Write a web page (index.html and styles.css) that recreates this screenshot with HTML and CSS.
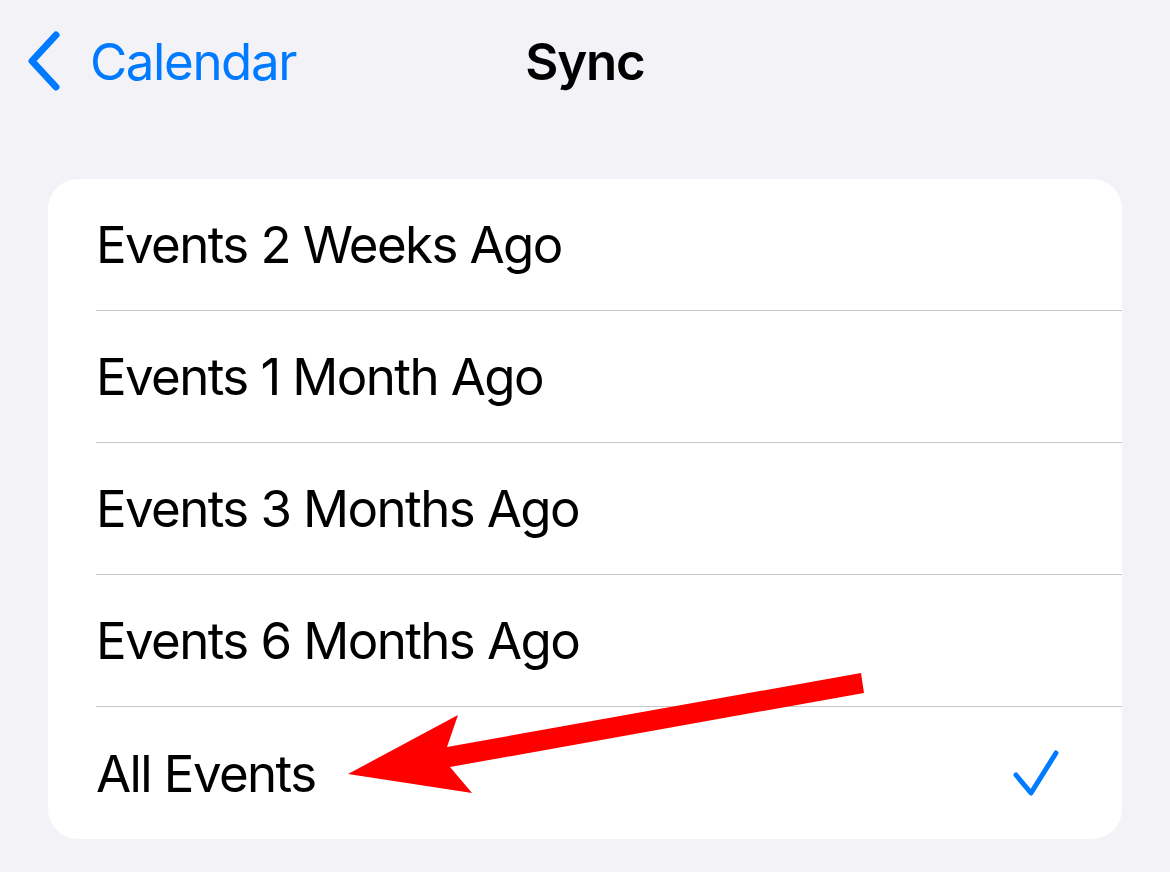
FILE: index.html
```html
<!DOCTYPE html>
<html lang="en">
<head>
<meta charset="utf-8">
<title>Sync</title>
<link rel="stylesheet" href="styles.css">
</head>
<body>
<div class="screen">
  <header class="nav">
    <div class="nav-left">
      <svg class="chevron" width="36" height="60" viewBox="0 0 36 60" aria-hidden="true">
        <path d="M30 4 L6 30 L30 56" fill="none" stroke="#007aff" stroke-width="7" stroke-linecap="round" stroke-linejoin="round"/>
      </svg>
      <span class="back-label">Calendar</span>
    </div>
    <h1 class="title">Sync</h1>
    <div class="nav-right"></div>
  </header>

  <section class="card">
    <div class="row"><div class="row-inner"><span class="label">Events 2 Weeks Ago</span></div></div>
    <div class="row"><div class="row-inner"><span class="label">Events 1 Month Ago</span></div></div>
    <div class="row"><div class="row-inner"><span class="label">Events 3 Months Ago</span></div></div>
    <div class="row"><div class="row-inner"><span class="label">Events 6 Months Ago</span></div></div>
    <div class="row"><div class="row-inner"><span class="label">All Events</span>
      <svg class="check" width="50" height="50" viewBox="0 0 50 50" aria-hidden="true">
        <path d="M5 27 L20 45 L45 5" fill="none" stroke="#007aff" stroke-width="5" stroke-linecap="round" stroke-linejoin="round"/>
      </svg>
    </div></div>
  </section>

  <svg class="annotation" width="1170" height="872" viewBox="0 0 1170 872" aria-hidden="true">
    <polygon points="861,673 864,693 450,767 472,793 348,774 458,715 447,747" fill="#ff0000"/>
  </svg>
</div>
</body>
</html>
```

FILE: styles.css
```css
html, body {
  margin: 0;
  padding: 0;
  background: #f2f2f7;
}

.screen {
  position: relative;
  width: 1170px;
  height: 872px;
  overflow: hidden;
  background: #f2f2f7;
  font-family: Inter, "Liberation Sans", Roboto, sans-serif;
  color: #000;
}

.nav {
  display: grid;
  grid-template-columns: 1fr auto 1fr;
  align-items: center;
  height: 122px;
}

.nav-left {
  display: flex;
  align-items: center;
  padding-left: 26px;
}

.chevron {
  display: block;
  margin-right: 28px;
}

.back-label {
  color: #007aff;
  font-size: 51px;
  letter-spacing: -1.4px;
}

.title {
  margin: 0;
  font-size: 51px;
  font-weight: 600;
  letter-spacing: -1.2px;
}

.card {
  margin: 57px 48px 0;
  background: #fff;
  border-radius: 30px;
  overflow: hidden;
}

.row {
  padding-left: 48px;
}

.row-inner {
  box-sizing: border-box;
  height: 132px;
  display: flex;
  align-items: center;
  justify-content: space-between;
  padding-right: 61px;
  border-bottom: 1px solid #c6c6c8;
}

.row:last-child .row-inner {
  border-bottom: none;
}

.label {
  font-size: 51px;
  letter-spacing: -1.6px;
}

.check {
  display: block;
}

.annotation {
  position: absolute;
  left: 0;
  top: 0;
  pointer-events: none;
}
```
